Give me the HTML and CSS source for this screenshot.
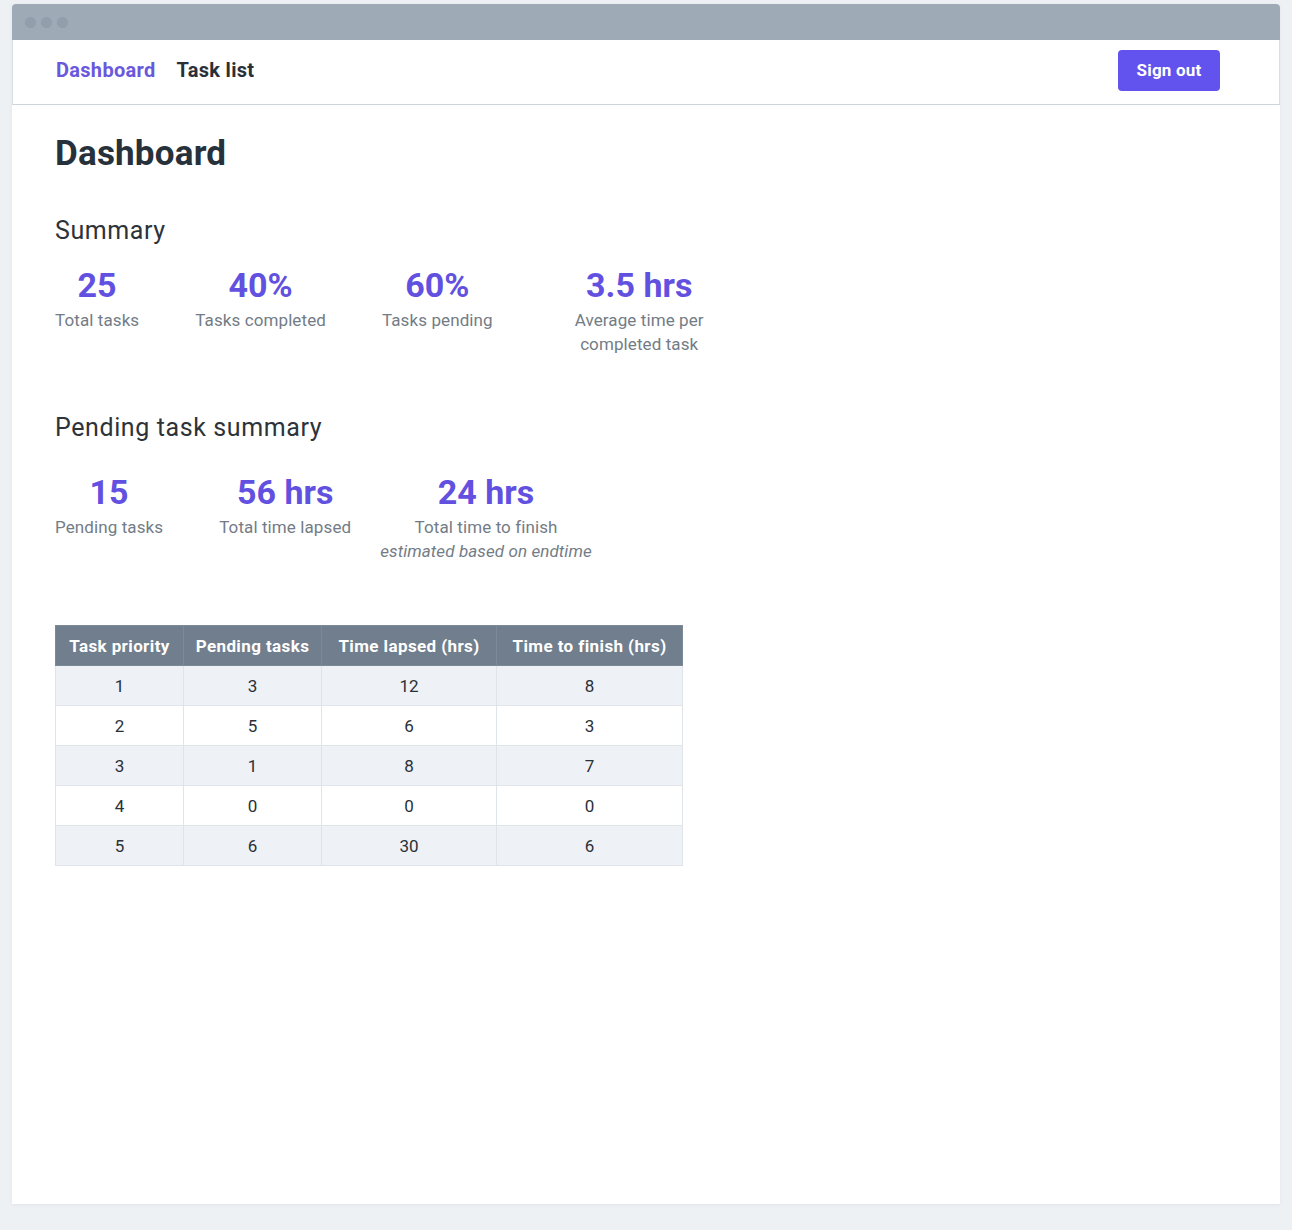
FILE: index.html
```html
<!DOCTYPE html>
<html lang="en">
<head>
<meta charset="utf-8">
<title>Dashboard</title>
<link rel="stylesheet" href="styles.css">
</head>
<body>
<div class="window">
  <div class="titlebar">
    <span class="dot"></span><span class="dot"></span><span class="dot"></span>
  </div>
  <header class="nav">
    <nav class="nav-links">
      <a class="nav-link active" href="#">Dashboard</a>
      <a class="nav-link" href="#">Task list</a>
    </nav>
    <button class="btn-signout" type="button">Sign out</button>
  </header>
  <main class="content">
    <h1 class="page-title">Dashboard</h1>

    <h2 class="section-title">Summary</h2>
    <div class="stats">
      <div class="stat"><div class="stat-value">25</div><div class="stat-label">Total tasks</div></div>
      <div class="stat"><div class="stat-value">40%</div><div class="stat-label">Tasks completed</div></div>
      <div class="stat"><div class="stat-value">60%</div><div class="stat-label">Tasks pending</div></div>
      <div class="stat stat-avg"><div class="stat-value">3.5 hrs</div><div class="stat-label">Average time per<br>completed task</div></div>
    </div>

    <h2 class="section-title section-pending">Pending task summary</h2>
    <div class="stats">
      <div class="stat"><div class="stat-value">15</div><div class="stat-label">Pending tasks</div></div>
      <div class="stat"><div class="stat-value">56 hrs</div><div class="stat-label">Total time lapsed</div></div>
      <div class="stat stat-finish"><div class="stat-value">24 hrs</div><div class="stat-label">Total time to finish</div><div class="stat-note">estimated based on endtime</div></div>
    </div>

    <table class="priority-table">
      <colgroup>
        <col class="col-1"><col class="col-2"><col class="col-3"><col class="col-4">
      </colgroup>
      <thead>
        <tr><th>Task priority</th><th>Pending tasks</th><th>Time lapsed (hrs)</th><th>Time to finish (hrs)</th></tr>
      </thead>
      <tbody>
        <tr><td>1</td><td>3</td><td>12</td><td>8</td></tr>
        <tr><td>2</td><td>5</td><td>6</td><td>3</td></tr>
        <tr><td>3</td><td>1</td><td>8</td><td>7</td></tr>
        <tr><td>4</td><td>0</td><td>0</td><td>0</td></tr>
        <tr><td>5</td><td>6</td><td>30</td><td>6</td></tr>
      </tbody>
    </table>
  </main>
</div>
</body>
</html>
```
FILE: styles.css
```css
* { box-sizing: border-box; }
html, body { margin: 0; padding: 0; }
body {
  background: #eef1f4;
  font-family: Roboto, "Liberation Sans", sans-serif;
  color: #2d3339;
  padding: 4px 12px 26px 12px;
}
.window {
  height: 1200px;
  background: #ffffff;
  display: flex;
  flex-direction: column;
  border-radius: 4px 4px 0 0;
  box-shadow: 0 1px 3px rgba(120, 135, 150, 0.12);
}
.titlebar {
  height: 36px;
  background: #9faab7;
  border-radius: 4px 4px 0 0;
  display: flex;
  align-items: center;
  gap: 5px;
  padding-left: 13px;
  flex-shrink: 0;
}
.dot {
  width: 11px;
  height: 11px;
  border-radius: 50%;
  background: #929eab;
}
.nav {
  height: 65px;
  flex-shrink: 0;
  display: flex;
  align-items: center;
  justify-content: space-between;
  padding: 0 59px 4px 43px;
  border-bottom: 1px solid #cdd4da;
  border-left: 1px solid #d9dee3;
  border-right: 1px solid #d9dee3;
}
.nav-links { display: flex; gap: 21px; }
.nav-link {
  font-size: 20px;
  font-weight: 700;
  letter-spacing: 0.3px;
  color: #2a3038;
  text-decoration: none;
}
.nav-link.active { color: #6a58dc; }
.btn-signout {
  width: 102px;
  height: 41px;
  background: #6253ee;
  color: #ffffff;
  border: none;
  border-radius: 4px;
  font-family: inherit;
  font-size: 17px;
  font-weight: 700;
  letter-spacing: 0.2px;
  cursor: pointer;
}
.content {
  padding: 0 43px;
  flex: 1;
}
.page-title {
  font-size: 35px;
  font-weight: 700;
  color: #27313b;
  margin: 28px 0 0 0;
  line-height: 42px;
  letter-spacing: 0.2px;
}
.section-title {
  font-size: 25px;
  font-weight: 400;
  color: #2d3339;
  margin: 40px 0 0 0;
  line-height: 32px;
  letter-spacing: 0.6px;
}
.section-pending { margin-top: 56px; }
.stats {
  display: flex;
  gap: 56px;
  margin-top: 18px;
}
.section-pending + .stats { margin-top: 28px; }
.stat {
  display: flex;
  flex-direction: column;
  align-items: center;
  text-align: center;
}
.stat-value {
  font-size: 34px;
  font-weight: 700;
  color: #6251e0;
  line-height: 40px;
}
.stat-label, .stat-note {
  font-size: 17px;
  color: #737c86;
  line-height: 24px;
  letter-spacing: 0.1px;
}
.stat-value + .stat-label { margin-top: 3px; }
.stat-note { font-style: italic; }
.stat-avg { margin-left: 26px; }
.stat-finish { margin-left: -27px; }
.priority-table {
  margin-top: 62px;
  border-collapse: collapse;
  table-layout: fixed;
  width: 627px;
  font-size: 17px;
}
.col-1 { width: 128px; }
.col-2 { width: 138px; }
.col-3 { width: 175px; }
.col-4 { width: 186px; }
.priority-table th {
  background: #707e8d;
  color: #ffffff;
  font-weight: 700;
  letter-spacing: 0.4px;
  height: 40px;
  padding: 0;
  border: 1px solid #7c8997;
  white-space: nowrap;
}
.priority-table td {
  height: 40px;
  padding: 0;
  text-align: center;
  color: #2a3038;
  border: 1px solid #dfe4e8;
}
.priority-table tbody tr:nth-child(odd) td { background: #eef1f5; }
.priority-table tbody tr:nth-child(even) td { background: #ffffff; }
```
